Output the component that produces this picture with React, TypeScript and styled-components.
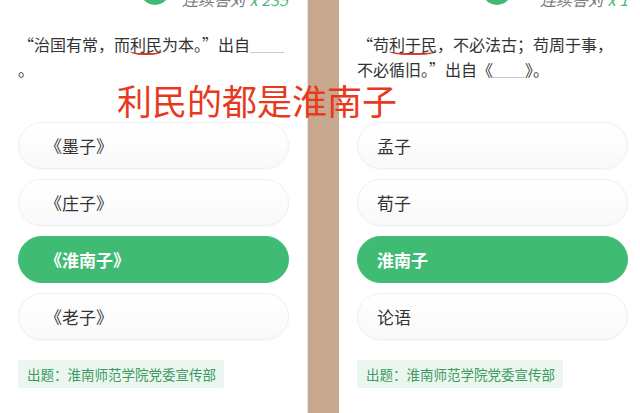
import styled, { createGlobalStyle } from "styled-components";

const GlobalStyle = createGlobalStyle`
  html, body {
    margin: 0;
    padding: 0;
    background: #ffffff;
  }
  body {
    font-family: "Noto Sans CJK SC", "Noto Sans", sans-serif;
  }
`;

const Page = styled.div`
  position: relative;
  display: flex;
  width: 640px;
  height: 413px;
  overflow: hidden;
  background: #ffffff;
`;

const Panel = styled.div<{ $width: number; $padRight: number }>`
  display: flex;
  flex-direction: column;
  width: ${(p) => p.$width}px;
  padding: 0 ${(p) => p.$padRight}px 0 18px;
  box-sizing: border-box;
  background: #ffffff;
`;

const Divider = styled.div`
  width: 32px;
  flex-shrink: 0;
  background: #c7a78d;
  border-left: 1px solid #e4e0dc;
  box-sizing: border-box;
`;

const Header = styled.div<{ $circleLeft: number; $textGap: number }>`
  display: flex;
  align-items: flex-end;
  gap: ${(p) => p.$textGap}px;
  height: 8px;
  overflow: hidden;
  padding-left: ${(p) => p.$circleLeft}px;
`;

const Badge = styled.div`
  width: 30px;
  height: 30px;
  flex-shrink: 0;
  margin-bottom: 3px;
  border-radius: 50%;
  background: #41b976;
`;

const Streak = styled.div`
  font-size: 16px;
  line-height: 16px;
  font-style: italic;
  color: #7a7a7a;
  white-space: nowrap;
  margin-bottom: 1px;

  em {
    color: #4cb882;
  }
`;

const Question = styled.p`
  margin: 24px 0 0;
  font-size: 16px;
  line-height: 25px;
  color: #333333;
`;

const Marked = styled.span`
  display: inline-block;
  line-height: 18px;
  border-bottom: 2px solid #d8362a;
  border-radius: 0 0 40% 40% / 0 0 4px 4px;
`;

const Blank = styled.span<{ $width: number }>`
  display: inline-block;
  width: ${(p) => p.$width}px;
  height: 18px;
  border-bottom: 1px solid #c9c9c9;
  vertical-align: -2px;
`;

const Options = styled.div`
  display: flex;
  flex-direction: column;
  gap: 10px;
  margin-top: 40px;
`;

const Option = styled.div<{ $active?: boolean; $indent: number }>`
  display: flex;
  align-items: center;
  width: 271px;
  height: 47px;
  box-sizing: border-box;
  padding-left: ${(p) => p.$indent}px;
  border-radius: 24px;
  font-size: 17px;
  font-weight: ${(p) => (p.$active ? 700 : 400)};
  color: ${(p) => (p.$active ? "#ffffff" : "#333333")};
  background: ${(p) =>
    p.$active ? "#3fbb74" : "linear-gradient(#ffffff, #f9f9fb)"};
  border: 1px solid ${(p) => (p.$active ? "#3fbb74" : "#efeff1")};
  box-shadow: ${(p) =>
    p.$active ? "none" : "0 1px 2px rgba(0, 0, 0, 0.03)"};
`;

const Source = styled.div`
  align-self: flex-start;
  margin-top: 20px;
  height: 28px;
  padding: 0 8px 0 9px;
  display: flex;
  align-items: center;
  font-size: 13.5px;
  color: #3d9a62;
  background: #eaf6ee;
  border-radius: 2px;
`;

const Caption = styled.div`
  position: absolute;
  left: 117px;
  top: 80px;
  font-size: 35px;
  line-height: 40px;
  color: #e8391e;
  white-space: nowrap;
`;

const leftOptions = ["《墨子》", "《庄子》", "《淮南子》", "《老子》"];
const rightOptions = ["孟子", "荀子", "淮南子", "论语"];

export default function App() {
  return (
    <>
      <GlobalStyle />
      <Page>
        <Panel $width={307} $padRight={18}>
          <Header $circleLeft={122} $textGap={12}>
            <Badge />
            <Streak>
              连续答对 <em>x 235</em>
            </Streak>
          </Header>
          <Question>
            “治国有常，而<Marked>利民</Marked>为本。”出自
            <Blank $width={34} />
            <br />。
          </Question>
          <Options>
            {leftOptions.map((o) => (
              <Option key={o} $indent={26} $active={o === "《淮南子》"}>
                {o}
              </Option>
            ))}
          </Options>
          <Source>出题：淮南师范学院党委宣传部</Source>
        </Panel>
        <Divider />
        <Panel $width={301} $padRight={12}>
          <Header $circleLeft={125} $textGap={28}>
            <Badge />
            <Streak>
              连续答对 <em>x 1275</em>
            </Streak>
          </Header>
          <Question>
            “苟<Marked>利于民</Marked>，不必法古；苟周于事，
            <br />
            不必循旧。”出自《<Blank $width={32} />》。
          </Question>
          <Options>
            {rightOptions.map((o) => (
              <Option key={o} $indent={19} $active={o === "淮南子"}>
                {o}
              </Option>
            ))}
          </Options>
          <Source>出题：淮南师范学院党委宣传部</Source>
        </Panel>
        <Caption>利民的都是淮南子</Caption>
      </Page>
    </>
  );
}
